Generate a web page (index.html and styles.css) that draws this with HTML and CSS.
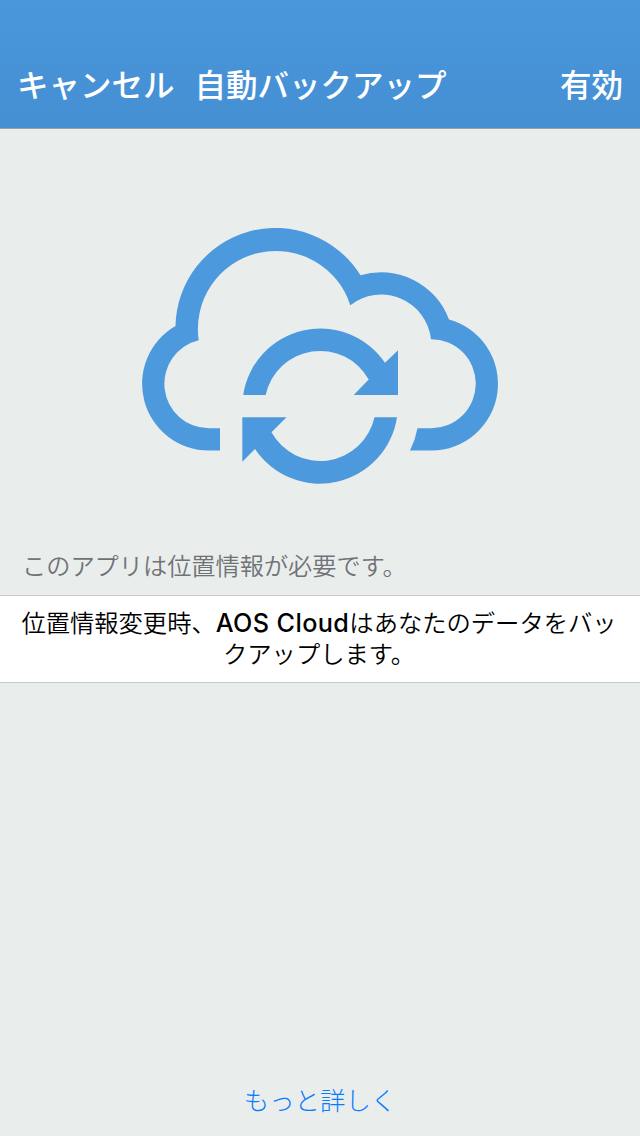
FILE: index.html
```html
<!DOCTYPE html>
<html lang="ja">
<head>
  <meta charset="UTF-8" />
  <meta name="viewport" content="width=device-width, initial-scale=1.0" />
  <title>自動バックアップ</title>
  <link rel="stylesheet" href="styles.css">
</head>
<body>
  <header class="navbar">
    <a class="nav-link" href="#">キャンセル</a>
    <h1 class="nav-title">自動バックアップ</h1>
    <a class="nav-link nav-right" href="#">有効</a>
  </header>
  <main class="content">
    <svg class="cloud" viewBox="142 228 356 256">
      <!-- cloud outline -->
      <path d="M220 450.5H208.7A66.7 66.7 0 0 1 175.5 326A100 100 0 0 1 360.5 275.3A72.3 72.3 0 0 1 449 319.5A66.7 66.7 0 0 1 431.5 450.5H410Q415.3 440 417.5 428.3H431.5A44.5 44.5 0 0 0 431 339.2A50.1 50.1 0 0 0 350.3 305.3A78.05 78.05 0 0 0 198.7 340.3A44.6 44.6 0 0 0 208.7 428.3H220Z"/>
      <!-- sync arrows -->
      <path d="M243.2 395A78 78 0 0 1 385 362.8L398 350.3V395H353.7L368.7 379.5A55.6 55.6 0 0 0 265.7 395Z"/>
      <path d="M397 417.2A78 78 0 0 1 255 449L242.3 461.7V417.2H286.5L271.5 432.3A55.6 55.6 0 0 0 374.5 417.2Z"/>
    </svg>
    <p class="section-title">このアプリは位置情報が必要です。</p>
    <div class="message">位置情報変更時、<span class="brand">AOS Cloud</span>はあなたのデータをバックアップします。</div>
  </main>
  <footer class="footer">
    <a class="more-link" href="#">もっと詳しく</a>
  </footer>
</body>
</html>
```

FILE: styles.css
```css
:root {
  --primary: #4d99dd;
  --bg: #e9eeed;
  --line: #c7c9cb;
}
* {
  box-sizing: border-box;
  margin: 0;
  padding: 0;
}
body {
  display: flex;
  flex-direction: column;
  height: 100vh;
  background: var(--bg);
  font-family: "Noto Sans CJK JP", sans-serif;
  font-weight: 350;
}
a {
  text-decoration: none;
}
.navbar {
  display: flex;
  align-items: center;
  height: 129px;
  padding: 38px 17px 0 17px;
  background: linear-gradient(180deg, #4a97db 0%, #458fd3 100%);
  border-bottom: 1px solid #9ba1a5;
  color: #fff;
}
.nav-link, .nav-title {
  font-size: 31.5px;
  line-height: 40px;
  font-weight: 500;
  color: #fff;
}
.nav-title {
  margin-left: 20px;
}
.nav-right {
  margin-left: auto;
}
.content {
  flex: 1;
}
.cloud {
  display: block;
  width: 356px;
  height: 256px;
  margin: 99px auto 0;
  fill: var(--primary);
}
.section-title {
  margin-top: 63px;
  padding-left: 22px;
  font-size: 24.2px;
  line-height: 36px;
  color: #717276;
}
.message {
  margin-top: 12px;
  height: 88px;
  padding: 10px 22px 0 20px;
  border-top: 1px solid var(--line);
  border-bottom: 1px solid var(--line);
  background: #fff;
  color: #000;
  font-size: 24.3px;
  line-height: 31px;
  text-align: center;
  word-break: break-all;
}
.brand {
  font-family: Inter, sans-serif;
  font-size: 25.2px;
  line-height: 1;
  font-weight: 500;
  letter-spacing: 0.4px;
}
.footer {
  padding-bottom: 19px;
  text-align: center;
}
.more-link {
  font-size: 25.4px;
  line-height: 36px;
  font-weight: 300;
  color: #0a7bff;
}
```
